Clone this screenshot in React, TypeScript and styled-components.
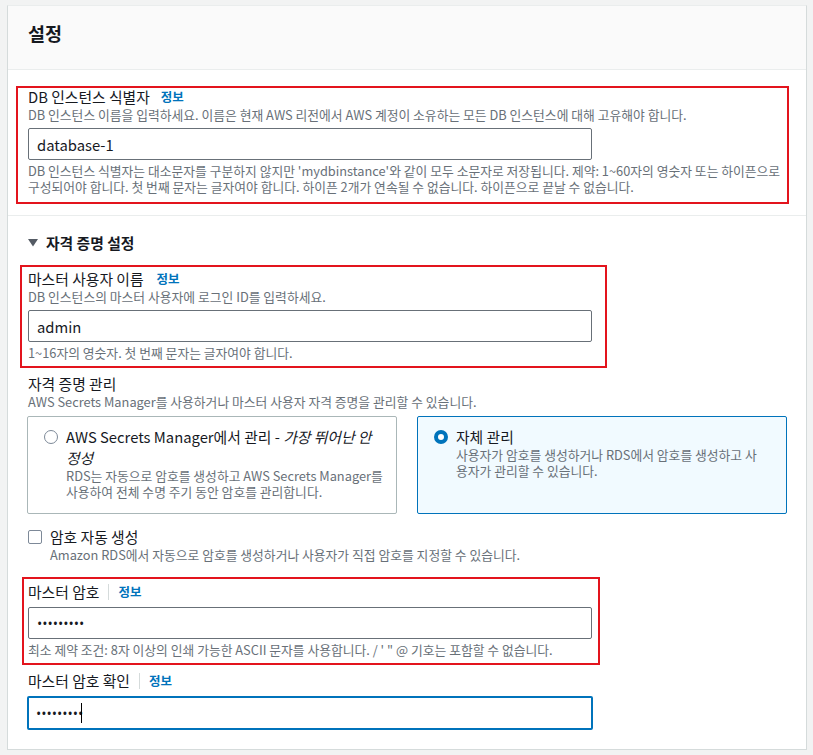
import styled, { createGlobalStyle } from "styled-components";

const GlobalStyle = createGlobalStyle`
  html, body {
    margin: 0;
    background: #f2f3f3;
  }
  body {
    font-family: "Noto Sans CJK KR", "Noto Sans", sans-serif;
    color: #16191f;
  }
  * {
    box-sizing: border-box;
  }
`;

const Page = styled.div`
  padding: 5px 6px 6px 7px;
`;

const Panel = styled.div`
  width: 800px;
  background: #fff;
  border: 1px solid #d5dbdb;
  border-top-color: #eaeded;
`;

const PanelHeader = styled.h2`
  margin: 0;
  height: 64px;
  padding: 15px 0 0 20px;
  background: #fafafa;
  border-bottom: 1px solid #eaeded;
  font-size: 18.5px;
  line-height: 24px;
  font-weight: 700;
`;

const Section = styled.div<{ $divided?: boolean }>`
  padding: 17px 19px ${({ $divided }) => ($divided ? "20px" : "19px")} 20px;
  border-bottom: ${({ $divided }) => ($divided ? "1px solid #eaeded" : "none")};
`;

const Field = styled.div<{ $mt?: number }>`
  position: relative;
  margin-top: ${({ $mt }) => $mt ?? 0}px;
`;

// red annotation box drawn over the field
const Highlight = styled.div<{ $top: number; $left: number; $width: number; $height: number }>`
  position: absolute;
  top: ${({ $top }) => $top}px;
  left: ${({ $left }) => $left}px;
  width: ${({ $width }) => $width}px;
  height: ${({ $height }) => $height}px;
  border: 2px solid #e3141d;
  pointer-events: none;
`;

const LabelRow = styled.div`
  display: flex;
  align-items: center;
  font-size: 14.8px;
  line-height: 20px;
  color: #16191f;
`;

const InfoLink = styled.a<{ $gap?: number }>`
  margin-left: ${({ $gap }) => $gap ?? 0}px;
  font-size: 12.5px;
  font-weight: 700;
  color: #0073bb;
  text-decoration: none;
`;

const LabelDivider = styled.span`
  width: 1px;
  height: 16px;
  margin: 0 9px 0 9px;
  background: #d5dbdb;
`;

const Hint = styled.div<{ $mt?: number; $indent?: number }>`
  margin-top: ${({ $mt }) => $mt ?? 0}px;
  margin-left: ${({ $indent }) => $indent ?? 0}px;
  font-size: 12.8px;
  line-height: 16px;
  color: #687078;
`;

const InputWrap = styled.div`
  position: relative;
  margin-top: 5px;
`;

const TextInput = styled.input<{ $focused?: boolean; $secret?: boolean }>`
  display: block;
  width: ${({ $focused }) => ($focused ? 566 : 564)}px;
  height: ${({ $focused }) => ($focused ? 34 : 32)}px;
  margin-left: ${({ $focused }) => ($focused ? -1 : 0)}px;
  padding: 0 ${({ $focused }) => ($focused ? 7 : 8)}px;
  border: ${({ $focused }) => ($focused ? "2px solid #0073bb" : "1px solid #687078")};
  border-radius: 2px;
  background: #fff;
  font-family: ${({ $secret }) => ($secret ? '"Open Sans", sans-serif' : "inherit")};
  font-size: ${({ $secret }) => ($secret ? 14 : 14.8)}px;
  color: #16191f;
  outline: none;
`;

const Caret = styled.span`
  position: absolute;
  left: 53px;
  top: 7px;
  width: 1px;
  height: 20px;
  background: #000;
`;

const ExpandHeader = styled.div`
  display: flex;
  align-items: center;
  gap: 8px;
  font-size: 14.8px;
  line-height: 20px;
  font-weight: 700;
  color: #16191f;
`;

const GroupTitle = styled.div`
  margin-top: 13px;
  font-size: 14.8px;
  line-height: 20px;
`;

const OptionGrid = styled.div`
  display: grid;
  grid-template-columns: 370px 370px;
  gap: 20px;
  margin: 6px 0 0 -1px;
`;

const OptionCard = styled.label<{ $selected?: boolean; $padRight?: number }>`
  display: flex;
  gap: 8px;
  padding: 9px ${({ $padRight }) => $padRight ?? 18}px 13px 16px;
  border: 1px solid ${({ $selected }) => ($selected ? "#0073bb" : "#aab7b8")};
  border-radius: 2px;
  background: ${({ $selected }) => ($selected ? "#f1faff" : "#fff")};
`;

const RadioDot = styled.span<{ $checked?: boolean }>`
  flex: none;
  width: 14px;
  height: 14px;
  margin-top: 4px;
  border-radius: 50%;
  background: #fff;
  border: ${({ $checked }) => ($checked ? "4px solid #0073bb" : "1.5px solid #7d8998")};
`;

const OptionBody = styled.div`
  display: flex;
  flex-direction: column;
`;

const OptionTitle = styled.div<{ $maxWidth?: number }>`
  max-width: ${({ $maxWidth }) => ($maxWidth ? `${$maxWidth}px` : "none")};
  font-size: 14.8px;
  line-height: 21px;
  color: #16191f;
`;

const CheckRow = styled.label`
  display: flex;
  align-items: center;
  gap: 8px;
  margin-top: 13px;
  font-size: 14.8px;
  line-height: 20px;
`;

const CheckBox = styled.span`
  width: 14px;
  height: 14px;
  border: 1.5px solid #7d8998;
  border-radius: 2px;
  background: #fff;
`;

function CaretDown() {
  return (
    <svg width="10" height="8" viewBox="0 0 10 8">
      <path d="M0 0 H10 L5 7.5 Z" fill="#545b64" />
    </svg>
  );
}

export default function App() {
  return (
    <>
      <GlobalStyle />
      <Page>
        <Panel>
          <PanelHeader>설정</PanelHeader>

          <Section $divided>
            <Field>
              <LabelRow>
                DB 인스턴스 식별자
                <InfoLink $gap={11}>정보</InfoLink>
              </LabelRow>
              <Hint>
                DB 인스턴스 이름을 입력하세요. 이름은 현재 AWS 리전에서 AWS 계정이 소유하는 모든 DB 인스턴스에 대해 고유해야 합니다.
              </Hint>
              <InputWrap>
                <TextInput defaultValue="database-1" />
              </InputWrap>
              <Hint $mt={3}>
                DB 인스턴스 식별자는 대소문자를 구분하지 않지만 'mydbinstance'와 같이 모두 소문자로 저장됩니다. 제약: 1~60자의 영숫자 또는 하이픈으로 구성되어야 합니다. 첫 번째 문자는 글자여야 합니다. 하이픈 2개가 연속될 수 없습니다. 하이픈으로 끝날 수 없습니다.
              </Hint>
              <Highlight $top={-1} $left={-12} $width={773} $height={118} />
            </Field>
          </Section>

          <Section>
            <ExpandHeader>
              <CaretDown />
              자격 증명 설정
            </ExpandHeader>

            <Field $mt={16}>
              <LabelRow>
                마스터 사용자 이름
                <InfoLink $gap={13}>정보</InfoLink>
              </LabelRow>
              <Hint>DB 인스턴스의 마스터 사용자에 로그인 ID를 입력하세요.</Hint>
              <InputWrap>
                <TextInput defaultValue="admin" />
              </InputWrap>
              <Hint $mt={3}>1~16자의 영숫자. 첫 번째 문자는 글자여야 합니다.</Hint>
              <Highlight $top={-4} $left={-8} $width={587} $height={103} />
            </Field>

            <GroupTitle>자격 증명 관리</GroupTitle>
            <Hint>AWS Secrets Manager를 사용하거나 마스터 사용자 자격 증명을 관리할 수 있습니다.</Hint>
            <OptionGrid>
              <OptionCard $padRight={6}>
                <RadioDot />
                <OptionBody>
                  <OptionTitle $maxWidth={312}>
                    AWS Secrets Manager에서 관리 - <i>가장 뛰어난 안정성</i>
                  </OptionTitle>
                  <Hint>
                    RDS는 자동으로 암호를 생성하고 AWS Secrets Manager를 사용하여 전체 수명 주기 동안 암호를 관리합니다.
                  </Hint>
                </OptionBody>
              </OptionCard>
              <OptionCard $selected>
                <RadioDot $checked />
                <OptionBody>
                  <OptionTitle>자체 관리</OptionTitle>
                  <Hint>사용자가 암호를 생성하거나 RDS에서 암호를 생성하고 사용자가 관리할 수 있습니다.</Hint>
                </OptionBody>
              </OptionCard>
            </OptionGrid>

            <CheckRow>
              <CheckBox />
              암호 자동 생성
            </CheckRow>
            <Hint $indent={22}>Amazon RDS에서 자동으로 암호를 생성하거나 사용자가 직접 암호를 지정할 수 있습니다.</Hint>

            <Field $mt={19}>
              <LabelRow>
                마스터 암호
                <LabelDivider />
                <InfoLink>정보</InfoLink>
              </LabelRow>
              <InputWrap>
                <TextInput $secret type="password" defaultValue="123456789" />
              </InputWrap>
              <Hint $mt={3}>최소 제약 조건: 8자 이상의 인쇄 가능한 ASCII 문자를 사용합니다. / ' " @ 기호는 포함할 수 없습니다.</Hint>
              <Highlight $top={-5} $left={-6} $width={578} $height={88} />
            </Field>

            <Field $mt={13}>
              <LabelRow>
                마스터 암호 확인
                <LabelDivider />
                <InfoLink>정보</InfoLink>
              </LabelRow>
              <InputWrap>
                <TextInput $focused $secret type="password" defaultValue="123456789" />
                <Caret />
              </InputWrap>
            </Field>
          </Section>
        </Panel>
      </Page>
    </>
  );
}
